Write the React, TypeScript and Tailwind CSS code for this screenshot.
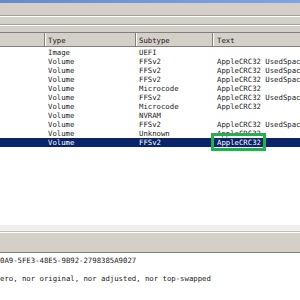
import React from 'react';

const rows = [
  { type: 'Image', subtype: 'UEFI', text: '' },
  { type: 'Volume', subtype: 'FFSv2', text: 'AppleCRC32 UsedSpace' },
  { type: 'Volume', subtype: 'FFSv2', text: 'AppleCRC32 UsedSpace' },
  { type: 'Volume', subtype: 'FFSv2', text: 'AppleCRC32 UsedSpace' },
  { type: 'Volume', subtype: 'Microcode', text: 'AppleCRC32' },
  { type: 'Volume', subtype: 'FFSv2', text: 'AppleCRC32 UsedSpace' },
  { type: 'Volume', subtype: 'Microcode', text: 'AppleCRC32' },
  { type: 'Volume', subtype: 'NVRAM', text: '' },
  { type: 'Volume', subtype: 'FFSv2', text: 'AppleCRC32 UsedSpace' },
  { type: 'Volume', subtype: 'Unknown', text: 'AppleCRC32' },
  { type: 'Volume', subtype: 'FFSv2', text: 'AppleCRC32', selected: true },
];

const mono = "font-['DejaVu_Sans_Mono','Liberation_Mono',monospace] text-[7.3px]";

export default function App() {
  return (
    <div className={`relative w-[300px] h-[300px] overflow-hidden bg-white text-[#1a1a1a] ${mono}`}>
      {/* window title bar bottom */}
      <div className="h-[3px] bg-gradient-to-r from-[#6a8ac4] to-[#82a4dc]" />
      {/* menu + toolbar */}
      <div className="h-[13px] bg-[#d4d0c8] border-b border-[#a5a29b]" />
      <div className="h-[1px] bg-white" />
      <div className="h-[8px] bg-[#d4d0c8] border-b border-[#a5a29b]" />
      <div className="h-[1px] bg-white" />
      <div className="h-[7px] bg-[#d4d0c8] border-b border-[#808080]" />

      {/* header */}
      <div className="flex h-[14px] bg-[#d4d0c8] border-b border-[#808080] text-[#1a1a1a]">
        <div className="w-[45px] border-r border-[#808080]" />
        <div className="w-[91px] border-l border-white border-r border-r-[#808080] pl-[2px] leading-[15px]">Type</div>
        <div className="w-[77px] border-l border-white border-r border-r-[#808080] pl-[2px] leading-[15px]">Subtype</div>
        <div className="flex-1 border-l border-white pl-[3px] leading-[15px]">Text</div>
      </div>

      {/* rows */}
      <div className="pt-[1px]">
        {rows.map((r, i) => (
          <div
            key={i}
            className={`flex h-[9px] leading-[9px] whitespace-nowrap ${r.selected ? 'bg-[#0a246a] text-white' : ''}`}
          >
            <div className="w-[48px]" />
            <div className="w-[91px]">{r.type}</div>
            <div className="w-[78px]">{r.subtype}</div>
            <div className="flex-1 overflow-hidden">{r.text}</div>
          </div>
        ))}
      </div>

      {/* highlight marker */}
      <div className="absolute left-[211px] top-[133px] w-[55px] h-[18px] border-[3px] border-[#22b14c]" />

      {/* bottom panel */}
      <div className="absolute left-0 right-0 top-[225px]">
        <div className="h-[7px] bg-[#f0efec] border-b border-[#c0bdb6]" />
        <div className="h-[21px] bg-[#d4d0c8] border-t border-white border-b border-b-[#808080]" />
        <div className="pt-[3px] leading-[9px] whitespace-nowrap">
          <div>0A9-5FE3-48E5-9B92-2798385A9027</div>
          <div className="mt-[9px]">ero, nor original, nor adjusted, nor top-swapped</div>
        </div>
      </div>
    </div>
  );
}
